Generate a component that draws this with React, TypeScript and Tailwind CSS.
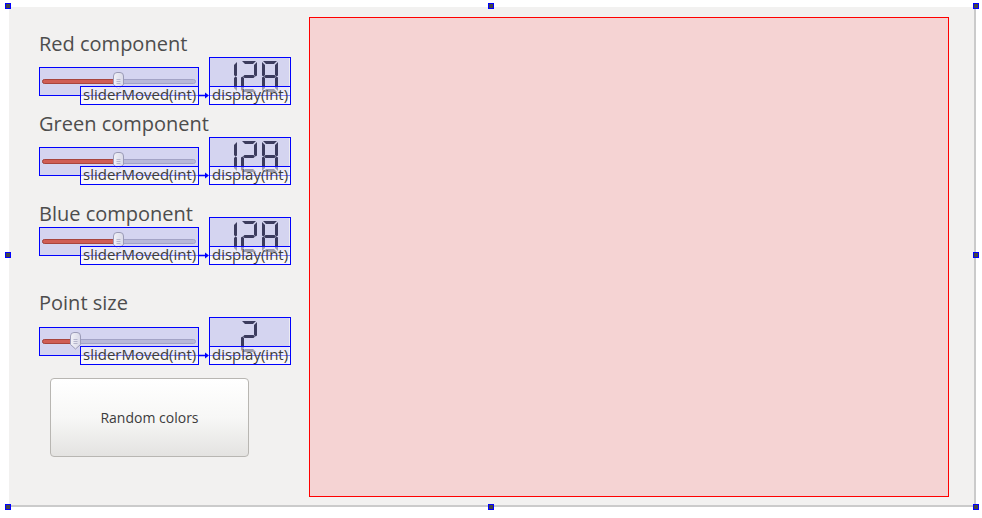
import React from "react";

const SEG: Record<string, string> = {
  a: "1,0 15,0 12,3 4,3",
  b: "16,1 16,14.5 14.5,15.5 13,14 13,4",
  c: "16,16.5 16,30 13,27 13,17 14.5,15.5",
  d: "1,31 15,31 12,28 4,28",
  e: "0,16.5 1.5,15.5 3,17 3,27 0,30",
  f: "0,1 3,4 3,14 1.5,15.5 0,14.5",
  g: "2,15.5 3.5,14 12.5,14 14,15.5 12.5,17 3.5,17",
};
const DIG: Record<string, string> = {
  "0": "abcdef",
  "1": "bc",
  "2": "abged",
  "3": "abgcd",
  "4": "fgbc",
  "5": "afgcd",
  "6": "afgedc",
  "7": "abc",
  "8": "abcdefg",
  "9": "abcdfg",
};

function Digit({ ch, x }: { ch: string; x: number }) {
  return (
    <g transform={`translate(${x},3)`}>
      {DIG[ch].split("").map((s) => (
        <polygon key={s} points={SEG[s]} fill="#3b3b5e" />
      ))}
    </g>
  );
}

function Lcd({ digits }: { digits: { ch: string; x: number }[] }) {
  return (
    <div className="relative w-[82px] h-[39px] bg-[#d4d4f0] border border-[#0000ff] shrink-0">
      <div className="absolute inset-0 border-r border-b border-[#ececf2]" />
      <svg className="absolute left-0 top-0" width="80" height="37" viewBox="0 0 80 37">
        {digits.map((d, i) => (
          <Digit key={i} ch={d.ch} x={d.x} />
        ))}
      </svg>
    </div>
  );
}

function Slider({ pos }: { pos: number }) {
  return (
    <div className="relative w-[160px] h-[29px] bg-[#d4d4f0] border border-[#0000ff] shrink-0">
      <div className="absolute left-[2px] top-[11px] w-[154px] h-[5px] rounded-full bg-[#b9b9d8] border border-[#a3a3c6]" />
      <div
        className="absolute left-[2px] top-[11px] h-[5px] rounded-full bg-[#d05d55] border border-[#a8443d]"
        style={{ width: pos + 4 }}
      />
      <svg
        className="absolute top-[4px]"
        style={{ left: pos }}
        width="13"
        height="18"
        viewBox="0 0 13 18"
      >
        <defs>
          <linearGradient id="hg" x1="0" y1="0" x2="1" y2="0">
            <stop offset="0" stopColor="#f2f2f8" />
            <stop offset="1" stopColor="#d9d9e8" />
          </linearGradient>
        </defs>
        <path
          d="M1.5 4 Q1.5 0.5 5 0.5 H8 Q11.5 0.5 11.5 4 V12.5 L6.5 17 L1.5 12.5 Z"
          fill="url(#hg)"
          stroke="#9b9bb8"
          strokeWidth="1"
        />
        <path d="M4.5 7.5 H8.5 M4.5 9.5 H8.5 M4.5 11.5 H8.5" stroke="#a8a8c2" strokeWidth="0.8" />
      </svg>
    </div>
  );
}

function WidgetRow({ pos, digits }: { pos: number; digits: { ch: string; x: number }[] }) {
  return (
    <div className="relative flex items-end h-[39px] text-[#3c3c3c]">
      <Slider pos={pos} />
      <div className="ml-[10px]">
        <Lcd digits={digits} />
      </div>
      <div className="absolute left-[41px] top-[29px] w-[119px] h-[19px] border border-[#0000ff] bg-white/50 text-[15px] leading-[15px] pl-[2px] whitespace-nowrap">
        sliderMoved(int)
      </div>
      <div className="absolute left-[170px] top-[29px] w-[82px] h-[19px] border border-[#0000ff] bg-white/50 text-[15px] leading-[15px] pl-[2px] whitespace-nowrap">
        display(int)
      </div>
      <svg className="absolute left-[159px] top-[35px]" width="12" height="7" viewBox="0 0 12 7">
        <line x1="0" y1="3.5" x2="8" y2="3.5" stroke="#0000ff" strokeWidth="1.5" />
        <polygon points="7,0.5 11,3.5 7,6.5" fill="#0000ff" />
      </svg>
    </div>
  );
}

function Title({ children, className = "" }: { children: React.ReactNode; className?: string }) {
  return (
    <div className={`h-[24px] leading-[24px] text-[20px] text-[#4d4d4d] whitespace-nowrap ${className}`}>
      {children}
    </div>
  );
}

const d128 = [
  { ch: "1", x: 11 },
  { ch: "2", x: 31 },
  { ch: "8", x: 52 },
];
const d2 = [{ ch: "2", x: 31 }];

function Handle({ className }: { className: string }) {
  return <div className={`absolute w-[6px] h-[6px] bg-[#454545] border border-[#0000ff] ${className}`} />;
}

export default function App() {
  return (
    <div
      className="relative w-[982px] h-[518px] bg-white overflow-hidden pt-[7px] pl-[9px]"
      style={{ fontFamily: '"Open Sans", sans-serif' }}
    >
      <div className="w-[967px] h-[500px] bg-[#f2f1f0] border-r-2 border-b-2 border-[#cbcbcb] flex">
        <div className="w-[282px] pl-[30px] pt-[25px] flex flex-col shrink-0">
          <Title>Red component</Title>
          <div className="mt-[1px]">
            <WidgetRow pos={72} digits={d128} />
          </div>
          <Title className="mt-[16px]">Green component</Title>
          <div className="mt-[1px]">
            <WidgetRow pos={72} digits={d128} />
          </div>
          <Title className="mt-[26px]">Blue component</Title>
          <div className="mt-[-9px]">
            <WidgetRow pos={72} digits={d128} />
          </div>
          <Title className="mt-[35px]">Point size</Title>
          <div className="mt-[2px]">
            <WidgetRow pos={29} digits={d2} />
          </div>
          <button className="mt-[22px] ml-[11px] w-[199px] h-[79px] rounded-[4px] border border-[#b8b6b2] bg-gradient-to-b from-[#ffffff] via-[#f7f7f6] to-[#e4e3e1] text-[14px] text-[#3c3c3c] flex items-center justify-center">
            Random colors
          </button>
        </div>
        <div className="ml-[18px] mt-[10px] w-[640px] h-[480px] bg-[#f5d3d3] border border-[#ff0000] shrink-0" />
      </div>
      <Handle className="left-[5px] top-[3px]" />
      <Handle className="left-[488px] top-[3px]" />
      <Handle className="left-[973px] top-[3px]" />
      <Handle className="left-[5px] top-[252px]" />
      <Handle className="left-[973px] top-[252px]" />
      <Handle className="left-[5px] top-[504px]" />
      <Handle className="left-[488px] top-[504px]" />
      <Handle className="left-[973px] top-[504px]" />
    </div>
  );
}
